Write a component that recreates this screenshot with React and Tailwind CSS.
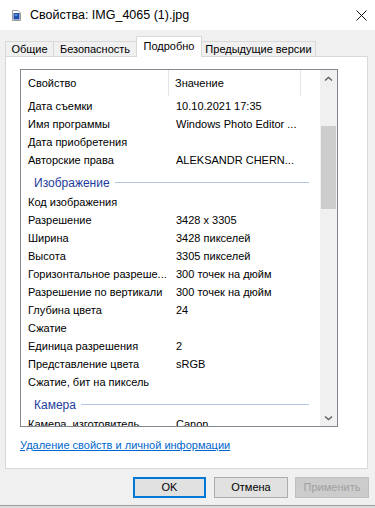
import React from "react";

const font = { fontFamily: '"Liberation Sans", Arial, sans-serif' };

const rows1 = [
  ["Дата съемки", "10.10.2021 17:35"],
  ["Имя программы", "Windows Photo Editor ..."],
  ["Дата приобретения", ""],
  ["Авторские права", "ALEKSANDR CHERN..."],
];

const rows2 = [
  ["Код изображения", ""],
  ["Разрешение", "3428 x 3305"],
  ["Ширина", "3428 пикселей"],
  ["Высота", "3305 пикселей"],
  ["Горизонтальное разреше...", "300 точек на дюйм"],
  ["Разрешение по вертикали", "300 точек на дюйм"],
  ["Глубина цвета", "24"],
  ["Сжатие", ""],
  ["Единица разрешения", "2"],
  ["Представление цвета", "sRGB"],
  ["Сжатие, бит на пиксель", ""],
];

function Row({ name, value }) {
  return (
    <div className="flex h-[18px] items-center text-black">
      <div className="w-[148px] shrink-0 pl-[7px] whitespace-nowrap overflow-hidden">{name}</div>
      <div className="pl-[7px] whitespace-nowrap">{value}</div>
    </div>
  );
}

function Group({ title }) {
  return (
    <div className="flex h-[24px] items-center pt-[3px] pl-[13px] pr-[11px]">
      <span className="text-[#1e3c9b] text-[12px] whitespace-nowrap">{title}</span>
      <div className="ml-[5px] h-px flex-1 bg-[#b4c6e8]" />
    </div>
  );
}

function Chevron({ down }) {
  return (
    <svg width="9" height="6" viewBox="0 0 9 6">
      <path
        d={down ? "M1 1.5 L4.5 4.5 L8 1.5" : "M1 4.5 L4.5 1.5 L8 4.5"}
        fill="none"
        stroke="#606060"
        strokeWidth="1.4"
      />
    </svg>
  );
}

export default function App() {
  return (
    <div className="w-[375px] h-[508px] bg-[#f0f0f0] overflow-hidden text-[11px]" style={font}>
      {/* Заголовок окна */}
      <div className="h-[30px] bg-white flex items-center">
        <svg className="ml-[12px]" width="9" height="11" viewBox="0 0 9 11">
          <path d="M0.5 0.5 H6 L8.5 3 V10.5 H0.5 Z" fill="#fff" stroke="#9a9a9a" />
          <rect x="1.5" y="3" width="6" height="6.5" fill="#1f4fa8" />
          <rect x="2.5" y="4" width="3" height="2" fill="#5a8ad6" />
        </svg>
        <span className="ml-[9px] text-[12.5px] text-black">Свойства: IMG_4065 (1).jpg</span>
        <svg className="ml-auto mr-[8px]" width="11" height="11" viewBox="0 0 11 11">
          <path d="M0.5 0.5 L10.5 10.5 M10.5 0.5 L0.5 10.5" stroke="#111" strokeWidth="1" />
        </svg>
      </div>

      {/* Вкладки */}
      <div className="mt-[6px] ml-[5px] flex items-end h-[20px]">
        <div className="w-[48px] h-[15px] border-l border-t border-[#d9d9d9] flex items-center justify-center text-black">Общие</div>
        <div className="w-[83px] h-[15px] border-l border-t border-[#d9d9d9] flex items-center justify-center text-black">Безопасность</div>
        <div className="relative z-10 -mb-px w-[66px] h-[21px] bg-white border-l border-r border-t border-[#d9d9d9] flex items-center justify-center pb-[2px] text-black">Подробно</div>
        <div className="w-[114px] h-[15px] border-t border-r border-[#d9d9d9] flex items-center justify-center text-black">Предыдущие версии</div>
      </div>

      {/* Панель */}
      <div className="ml-[5px] w-[363px] h-[413px] bg-white border border-[#d9d9d9]">
        <div className="ml-[14px] mt-[12px] w-[318px] h-[358px] border border-[#828790] flex overflow-hidden">
          <div className="w-[299px] overflow-hidden">
            <div className="flex h-[26px] items-center text-black">
              <div className="w-[148px] h-full flex items-center pl-[7px] border-r border-[#e5e5e5]">Свойство</div>
              <div className="w-[132px] h-full flex items-center pl-[6px] border-r border-[#e5e5e5]">Значение</div>
            </div>
            <div className="mt-px">
              {rows1.map(([n, v]) => (
                <Row key={n} name={n} value={v} />
              ))}
              <Group title="Изображение" />
              {rows2.map(([n, v]) => (
                <Row key={n} name={n} value={v} />
              ))}
              <Group title="Камера" />
              <Row name="Камера, изготовитель" value="Canon" />
            </div>
          </div>
          {/* Полоса прокрутки */}
          <div className="w-[17px] bg-[#f0f0f0] flex flex-col">
            <div className="h-[17px] flex items-center justify-center">
              <Chevron />
            </div>
            <div className="mt-[39px] mx-px h-[83px] bg-[#cdcdcd]" />
            <div className="mt-auto h-[17px] flex items-center justify-center">
              <Chevron down />
            </div>
          </div>
        </div>
        <div className="ml-[14px] mt-[10px] h-[16px] flex items-center">
          <span className="text-[#0066cc] underline">Удаление свойств и личной информации</span>
        </div>
      </div>

      {/* Кнопки */}
      <div className="mt-[8px] flex h-[21px]">
        <button className="ml-[133px] w-[73px] h-[21px] bg-[#e1e1e1] border-2 border-[#0078d7] text-black">OK</button>
        <button className="ml-[8px] w-[74px] h-[21px] bg-[#e1e1e1] border border-[#adadad] text-black">Отмена</button>
        <button className="ml-[7px] w-[74px] h-[21px] bg-[#cccccc] border border-[#bfbfbf] text-[#a0a0a0]">Применить</button>
      </div>

      <div className="mt-[7px] h-[3px] border-t border-[#9d9d9d] bg-[#dcdcdc]" />
    </div>
  );
}
